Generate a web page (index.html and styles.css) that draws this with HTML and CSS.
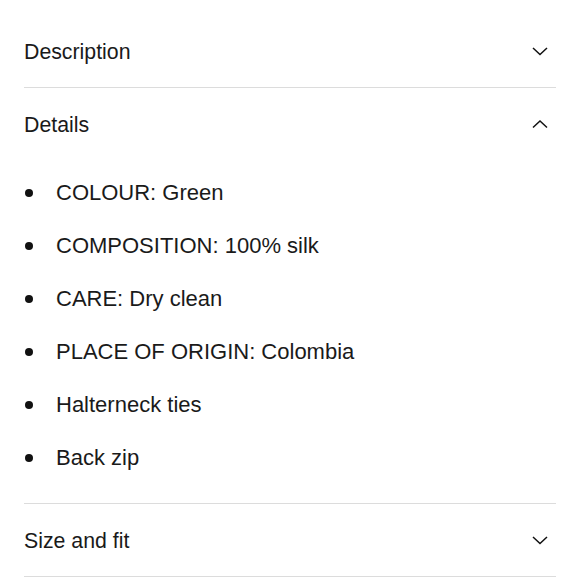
FILE: index.html
```html
<!DOCTYPE html>
<html>
<head>
<meta charset="utf-8">
<link rel="stylesheet" href="styles.css">
</head>
<body>
<div class="accordion">
  <section class="item">
    <div class="hdr"><span class="title">Description</span>
      <svg class="chev" width="18" height="10" viewBox="0 0 18 10"><polyline points="2,2 9,8.5 16,2" fill="none" stroke="#111" stroke-width="1.5"/></svg>
    </div>
  </section>
  <section class="item">
    <div class="hdr"><span class="title">Details</span>
      <svg class="chev" width="18" height="10" viewBox="0 0 18 10"><polyline points="2,8.5 9,2 16,8.5" fill="none" stroke="#111" stroke-width="1.5"/></svg>
    </div>
    <ul class="list">
      <li>COLOUR: Green</li>
      <li>COMPOSITION: 100% silk</li>
      <li>CARE: Dry clean</li>
      <li>PLACE OF ORIGIN: Colombia</li>
      <li>Halterneck ties</li>
      <li>Back zip</li>
    </ul>
  </section>
  <section class="item">
    <div class="hdr"><span class="title">Size and fit</span>
      <svg class="chev" width="18" height="10" viewBox="0 0 18 10"><polyline points="2,2 9,8.5 16,2" fill="none" stroke="#111" stroke-width="1.5"/></svg>
    </div>
  </section>
</div>
</body>
</html>
```
FILE: styles.css
```css
html, body {
  margin: 0;
  padding: 0;
  background: #fff;
}
body {
  font-family: "Liberation Sans", Arial, sans-serif;
  color: #1a1a1a;
}
.accordion {
  padding: 15px 24px 0 24px;
}
.item {
  border-bottom: 1px solid #dcdcdc;
}
.hdr {
  height: 72px;
  display: flex;
  align-items: center;
  justify-content: space-between;
}
.title {
  font-size: 21.3px;
  padding-top: 2px;
}
.chev {
  margin-right: 7px;
  display: block;
}
.list {
  list-style: none;
  margin: 0;
  padding: 6px 0 19px 0;
}
.list li {
  display: flex;
  align-items: center;
  height: 53px;
  font-size: 22px;
}
.list li::before {
  content: "";
  width: 8px;
  height: 8px;
  border-radius: 50%;
  background: #111;
  margin-left: 1px;
  margin-right: 23px;
  flex: none;
}
```
